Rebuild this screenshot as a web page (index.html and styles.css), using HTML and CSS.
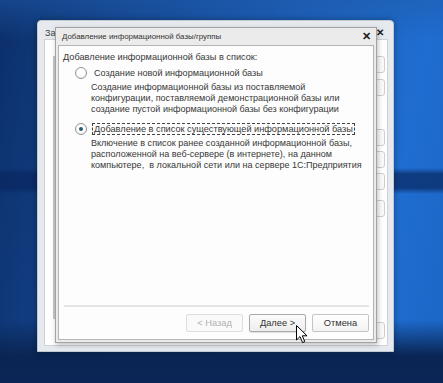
FILE: index.html
```html
<!DOCTYPE html>
<html lang="ru">
<head>
    <meta charset="UTF-8" />
    <meta name="viewport" content="width=device-width, initial-scale=1.0" />
    <title>Добавление информационной базы/группы</title>
    <link rel="stylesheet" href="styles.css">
</head>
<body>
<div class="desktop">
    <!-- Окно списка баз, лежит позади -->
    <div class="win back-win">
        <div class="back-title">
            <span class="back-caption">За</span>
            <span class="x-btn">✕</span>
        </div>
        <div class="back-body">
            <div class="back-list"></div>
            <div class="back-side">
                <span class="side-btn b1"></span>
                <span class="side-btn b2"></span>
                <span class="side-btn b3"></span>
                <span class="side-btn b4"></span>
                <span class="side-btn b5"></span>
                <span class="side-btn b6"></span>
                <span class="side-btn b7"></span>
            </div>
        </div>
    </div>

    <!-- Мастер добавления -->
    <div class="win dialog">
        <div class="dlg-title">
            <span>Добавление информационной базы/группы</span>
            <span class="x-btn">✕</span>
        </div>
        <div class="dlg-body">
            <p class="lead">Добавление информационной базы в список:</p>

            <div class="option first">
                <span class="radio"></span>
                <span class="opt-label">Создание новой информационной базы</span>
            </div>
            <p class="desc">Создание информационной базы из поставляемой<br>конфигурации, поставляемой демонстрационной базы или<br>создание пустой информационной базы без конфигурации</p>

            <div class="option">
                <span class="radio checked"></span>
                <span class="opt-label focused">Добавление в список существующей информационной базы</span>
            </div>
            <p class="desc">Включение в список ранее созданной информационной базы,<br>расположенной на веб-сервере (в интернете), на данном<br>компьютере,&nbsp; в локальной сети или на сервере 1С:Предприятия</p>

            <div class="dlg-footer">
                <button class="btn" disabled>&lt; Назад</button>
                <button class="btn hover">Далее &gt;</button>
                <button class="btn">Отмена</button>
            </div>
        </div>
    </div>

    <svg class="cursor" width="12" height="19" viewBox="0 0 12 19">
        <path d="M0.5 0.5 L0.5 15 L4 11.6 L6.6 17.6 L8.8 16.6 L6.3 10.8 L11 10.8 Z" fill="#fff" stroke="#000" stroke-width="1" stroke-linejoin="round"/>
    </svg>
</div>
</body>
</html>
```

FILE: styles.css
```css
html, body {
  margin: 0;
  padding: 0;
}
body {
  width: 443px;
  height: 383px;
  overflow: hidden;
  font-family: "Liberation Sans", Arial, sans-serif;
}
.desktop {
  position: relative;
  width: 443px;
  height: 383px;
  background:
    linear-gradient(to bottom, rgba(8, 32, 78, 0) 0, rgba(8, 32, 78, 0) 168px, rgba(8, 38, 96, 0.7) 174px, rgba(8, 38, 96, 0.7) 188px, rgba(8, 32, 78, 0) 194px),
    linear-gradient(to bottom, rgba(9, 34, 80, 0) 320px, #0a2553 356px, #0b2656 383px),
    linear-gradient(to bottom, rgba(30, 90, 170, 0.5) 0, rgba(30, 90, 170, 0) 40px),
    linear-gradient(100deg, #0c2f6a 0%, #0f3777 10%, #174f9f 40%, #1d62bd 65%, #1f6dd0 85%, #1b66c6 100%);
}

/* окна */
.win {
  position: absolute;
  box-sizing: border-box;
}
.x-btn {
  font-size: 10px;
  font-weight: bold;
  color: #222;
}

/* заднее окно */
.back-win {
  left: 37px;
  top: 20px;
  width: 357px;
  height: 332px;
  background: #e6eaee;
  border: 1px solid #c3c9d0;
  border-radius: 4px 4px 0 0;
  display: flex;
  flex-direction: column;
  padding: 0 5px 5px 6px;
  box-shadow: 0 0 6px rgba(0, 0, 0, 0.35);
}
.back-title {
  height: 17px;
  display: flex;
  justify-content: space-between;
  align-items: flex-end;
  font-size: 9px;
  color: #444;
  padding: 0 4px 1px 1px;
}
.back-body {
  flex: 1;
  background: #fff;
  border: 1px solid #cfd3d7;
  display: flex;
  justify-content: space-between;
  padding: 16px 2px 0 8px;
}
.back-list {
  width: 0;
  height: 263px;
  border-left: 2px solid #c8c8c8;
}
.back-side {
  display: flex;
  flex-direction: column;
  width: 60px;
}
.side-btn {
  display: block;
  height: 15px;
  border: 1px solid #cfcfcf;
  border-radius: 3px;
  background: #fafafa;
}
.b2 { margin-top: 6px; }
.b3 { margin-top: 33px; }
.b4 { margin-top: 5px; }
.b5 { margin-top: 5px; }
.b6 { margin-top: 10px; }
.b7 { margin-top: 105px; }

/* диалог */
.dialog {
  left: 55px;
  top: 27px;
  width: 322px;
  height: 316px;
  background: #ebebeb;
  border: 1px solid #a3a3a3;
  display: flex;
  flex-direction: column;
  padding: 0 2px 2px 2px;
  box-shadow: 1px 2px 5px rgba(0, 0, 0, 0.25);
}
.dlg-title {
  height: 17px;
  display: flex;
  justify-content: space-between;
  align-items: center;
  font-size: 7.9px;
  color: #333;
  padding: 0 3px 0 4px;
}
.dlg-title .x-btn {
  font-size: 11px;
}
.dlg-body {
  flex: 1;
  background: #fdfdfd;
  border: 1px solid #b4b4b4;
  display: flex;
  flex-direction: column;
  padding: 5px 4px 7px 4px;
  color: #383838;
  font-size: 9.1px;
  line-height: 11px;
}
.lead {
  margin: 0 0 3px 0;
  line-height: 12px;
  font-size: 9.2px;
}
.option {
  display: flex;
  align-items: center;
  gap: 5px;
  padding-left: 12px;
  height: 14px;
  margin-top: 7px;
}
.option.first {
  margin-top: 0;
}
.radio {
  width: 10px;
  height: 10px;
  border-radius: 50%;
  border: 1px solid #929292;
  background: radial-gradient(circle at 50% 35%, #ffffff 40%, #ececec 100%);
  display: flex;
  align-items: center;
  justify-content: center;
}
.radio.checked::after {
  content: "";
  width: 4px;
  height: 4px;
  border-radius: 50%;
  background: #275a73;
}
.opt-label {
  white-space: nowrap;
  padding: 0 1px;
  border: 1px solid transparent;
  line-height: 10px;
  font-size: 9.1px;
}
.opt-label.focused {
  border: 1px dashed #444;
  font-size: 9.2px;
}
.desc {
  margin: 2px 0 0 28px;
  white-space: nowrap;
  font-size: 9.05px;
}
.dlg-footer {
  margin-top: auto;
  border-top: 2px solid #e4e4e4;
  margin-left: 1px;
  padding-top: 7px;
  display: flex;
  justify-content: flex-end;
  gap: 6px;
}
.btn {
  width: 57px;
  height: 18px;
  font-family: "Liberation Sans", Arial, sans-serif;
  font-size: 9.3px;
  color: #333;
  background: linear-gradient(#ffffff, #f3f3f3);
  border: 1px solid #c4c4c4;
  border-radius: 2px;
  padding: 0;
}
.btn:disabled {
  color: #b0b0b0;
  border-color: #dedede;
  background: #fafafa;
}
.btn.hover {
  border-color: #a9a9a9;
  background: linear-gradient(#fbfbfb, #ededed);
  box-shadow: 0 1px 1px rgba(0, 0, 0, 0.12);
}

.cursor {
  position: absolute;
  left: 296px;
  top: 325px;
}
```
